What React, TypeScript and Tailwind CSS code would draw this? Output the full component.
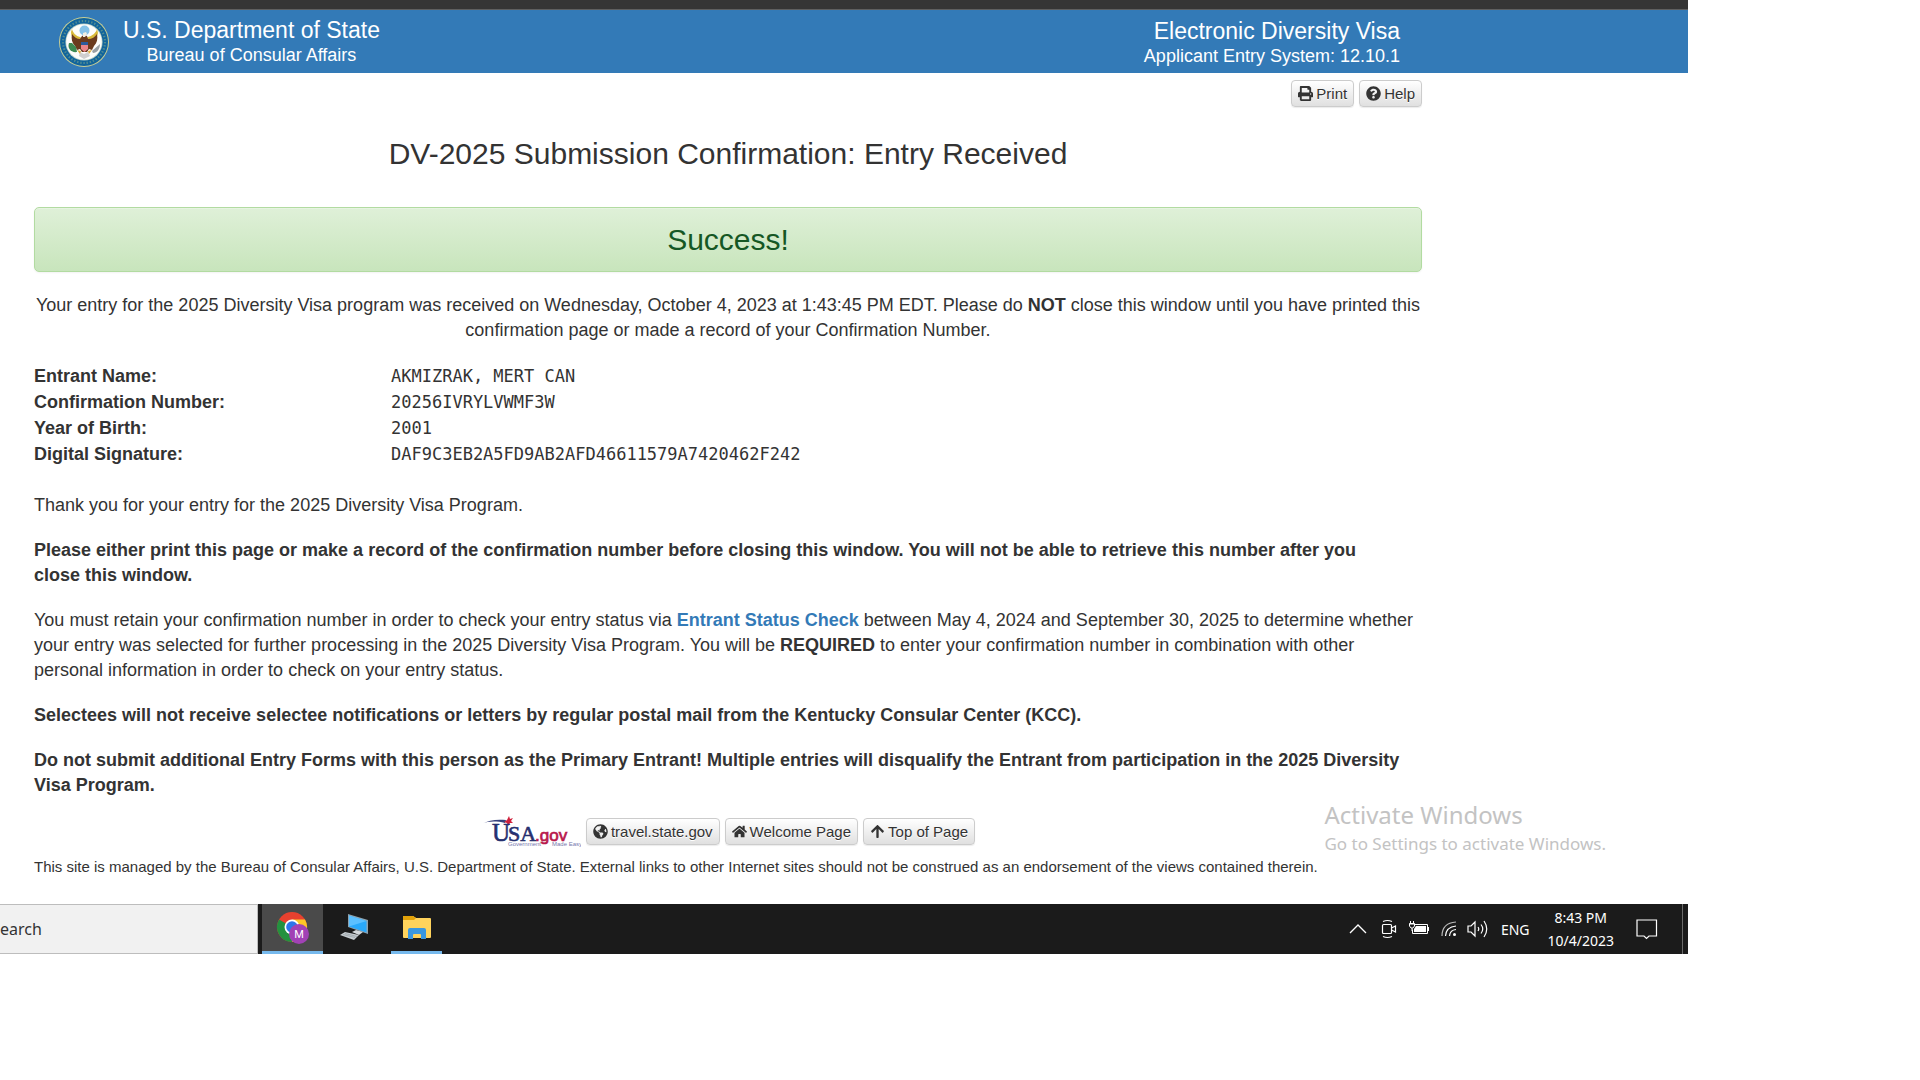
import type { ReactNode } from "react";
import { FaArrowUp, FaGlobeAmericas, FaHome, FaPrint, FaQuestionCircle } from "react-icons/fa";

const entrantDetails = [
  { label: "Entrant Name:", value: "AKMIZRAK, MERT CAN" },
  { label: "Confirmation Number:", value: "20256IVRYLVWMF3W" },
  { label: "Year of Birth:", value: "2001" },
  { label: "Digital Signature:", value: "DAF9C3EB2A5FD9AB2AFD46611579A7420462F242" },
];

const buttonClass =
  "flex h-[27px] cursor-pointer items-center gap-[3px] rounded border border-[#ccc] bg-linear-to-b from-white to-[#e0e0e0] px-1.5 text-[15px] leading-none whitespace-nowrap text-[#333] shadow-[0_1px_1px_rgba(0,0,0,0.08)] [text-shadow:0_1px_0_#fff]";

function SiteButton({ icon, children }: { icon: ReactNode; children: ReactNode }) {
  return (
    <button type="button" className={buttonClass}>
      {icon}
      {children}
    </button>
  );
}

function SiteLink({ icon, children }: { icon: ReactNode; children: ReactNode }) {
  return (
    <a href="#top" className={buttonClass}>
      {icon}
      {children}
    </a>
  );
}

function Seal() {
  return (
    <svg viewBox="0 0 50 50" className="size-[50px] shrink-0" role="img" aria-label="Department of State seal">
      <circle cx="25" cy="25" r="25" fill="#c9cf94" />
      <circle cx="25" cy="25" r="24" fill="#11649c" />
      <circle cx="25" cy="25" r="21" fill="none" stroke="#7fa98c" strokeWidth="2.2" strokeDasharray="1.4 1.8" opacity=".6" />
      <circle cx="25" cy="25" r="18.6" fill="#b9cfc4" />
      <circle cx="25" cy="25" r="17.8" fill="#fdfdfb" />
      <circle cx="25.5" cy="13.500" r="5" fill="#86c3e8" />
      <path d="M13 12c1 4 4 7 8 8l4 3 4-3c4-1 8-4 9-8l1 4c-1 5-4 7-8 9l-6 3-6-3c-4-2-7-5-7-10z" fill="#d9b93a" />
      <path d="M13 17c2 3 5 5 8 5l2-3 2-1 3 1 1 3c4 0 7-2 9-5 1 5 0 9-3 12l-2 4-3-1-2 3h-5l-2-3-3 1-2-4c-3-3-4-7-3-12z" fill="#6b3b1e" />
      <path d="M24 16l3-1 1 2-2 3h-2z" fill="#f3efe2" />
      <path d="M22 25h7v3h-7z" fill="#2c5b9c" />
      <path d="M22 28h7v4l-3.500 3-3.500-3z" fill="#e9848a" />
      <path d="M10 26c-2 5 2 10 8 9l-1-5-4-4z" fill="#3d8a52" />
      <path d="M41 27l-8 7 1 2c4 0 7-4 7-9z" fill="#9aa0a5" />
      <path d="M21 35l4 2 4-2 2 4-6 3-5-3z" fill="#cfcfcf" />
      <path d="M18 33l4 1-1 3zM33 33l-4 1 1 3z" fill="#d9a93a" />
    </svg>
  );
}

function UsaGovLogo() {
  return (
    <svg viewBox="0 0 100 31" className="-my-0.5 h-[31px] w-[100px]" role="img" aria-label="USA.gov, Government Made Easy">
      <path d="M0 8C8 4 16 3 25 4l-1 3C15 5 8 5 0 8z" fill="#35407c" />
      <path d="M28 0l1 3 3-1-2 3 2 2-3 0-2 3-1-3-3-1 3-2z" fill="#d0213c" />
      <text x="11" y="25" fontFamily="Liberation Serif, serif" fontSize="25" fill="#26306f" stroke="#26306f" strokeWidth=".6">U</text>
      <text x="27" y="25" fontFamily="Liberation Serif, serif" fontSize="22" fill="#26306f" stroke="#26306f" strokeWidth=".6">SA</text>
      <text x="54" y="25" fontFamily="Liberation Sans, sans-serif" fontSize="17" fill="#b8174c" stroke="#b8174c" strokeWidth=".7">.gov</text>
      <text x="27" y="30" fontFamily="Liberation Sans, sans-serif" fontSize="6" fill="#7778ad">Government</text>
      <text x="71" y="30" fontFamily="Liberation Sans, sans-serif" fontSize="6" fill="#7778ad">Made Easy</text>
    </svg>
  );
}

function ChromeIcon() {
  return (
    <svg viewBox="0 0 34 34" className="size-[34px]" aria-hidden="true">
      <circle cx="16" cy="16" r="15" fill="#e8412f" />
      <path d="M16 16L3 8.500A15 15 0 0 0 16 31l6.500-11z" fill="#23913f" />
      <path d="M16 8.500h13A15 15 0 0 1 16 31l6.500-11z" fill="#fdc727" />
      <circle cx="16" cy="16" r="7.500" fill="#fff" />
      <circle cx="16" cy="16" r="5.800" fill="#2d75ea" />
      <circle cx="23" cy="23" r="10" fill="#a142b5" />
      <text x="23" y="27" textAnchor="middle" fontFamily="Roboto, sans-serif" fontSize="11" fill="#fff">M</text>
    </svg>
  );
}

function ComputerIcon() {
  return (
    <svg viewBox="0 0 28 27" className="h-[27px] w-7" aria-hidden="true">
      <path d="M8 0l20 6v14L8 13z" fill="#8ea3b0" />
      <path d="M9 1.500l17.500 5.500v11.500L9 12.500z" fill="#29a9fb" />
      <path d="M9 1.500l17.500 5.500L9 12.500z" fill="#5cc0ff" />
      <path d="M12 18l4-2 7 2-4 3z" fill="#d5dadd" />
      <path d="M0 21l5-3 14 3-5 5z" fill="#c7cdd1" />
      <path d="M3 20.500l12 3M5 19.500l12 3" stroke="#8c959b" strokeWidth=".6" />
    </svg>
  );
}

function FolderIcon() {
  return (
    <svg viewBox="0 0 28 24" className="h-6 w-7" aria-hidden="true">
      <path d="M0 1q0-1 1-1h9l3 2h14q1 0 1 1v18q0 1-1 1H1q-1 0-1-1z" fill="#ffd35c" />
      <path d="M0 1q0-1 1-1h9l3 2-2 2H0z" fill="#e3a209" />
      <path d="M5 23V14q0-2 2-2h14q2 0 2 2v9h-5v-4q0-1-1-1h-6q-1 0-1 1v4z" fill="#3a97df" />
    </svg>
  );
}

function TaskButton({ label, active, running, children }: { label: string; active?: boolean; running?: boolean; children: ReactNode }) {
  return (
    <button
      type="button"
      aria-label={label}
      className={
        "flex h-full items-center justify-center border-b-[3px] " +
        (active ? "w-[61px] bg-[#4a4a4a] " : "w-[51px] ") +
        (running ? "border-[#76b9ed]" : "border-transparent")
      }
    >
      {children}
    </button>
  );
}

function TrayIcons() {
  return (
    <div className="flex items-center gap-3 text-white">
      <svg viewBox="0 0 18 20" className="h-5 w-[18px]" fill="none" stroke="currentColor" strokeWidth="1.300" aria-hidden="true">
        <path d="M1 14l8-8 8 8" />
      </svg>
      <svg viewBox="0 0 16 20" className="ml-0.5 h-5 w-4" fill="none" stroke="currentColor" strokeWidth="1.200" aria-hidden="true">
        <rect x="1.500" y="5.500" width="9" height="9" rx="1" />
        <path d="M10.500 9l4-2v6l-4-2M2 2.500q4.500-2 9 0M2 17.500q4.500 2 9 0" />
      </svg>
      <svg viewBox="0 0 20 20" className="h-5 w-5" fill="none" stroke="currentColor" aria-hidden="true">
        <path d="M6 5.500h12.500v9h-15v-4M19.500 8v4M1.500 2v3M4.500 2v3M.5 5h5M3 9v3" />
        <path d="M.5 4.500h5V7L4 9H2L.5 7z" strokeWidth="1" />
        <path d="M7 7h10v6H5v-3z" fill="currentColor" stroke="none" />
      </svg>
      <svg viewBox="0 0 16 20" className="h-5 w-4" fill="none" stroke="currentColor" strokeWidth="1.200" aria-hidden="true">
        <path d="M1 17Q1 4 15 3" opacity=".7" />
        <path d="M4.500 17Q5 8 15 7M8.500 17Q9 11 15 10.500" />
        <circle cx="13.500" cy="15.500" r="1.500" fill="currentColor" stroke="none" />
      </svg>
      <svg viewBox="0 0 22 20" className="-ml-0.5 h-5 w-[22px]" fill="none" stroke="currentColor" strokeWidth="1.200" aria-hidden="true">
        <path d="M1 7h3l4-4v14l-4-4H1z" />
        <path d="M11 8q1.500 2 0 4M14 5.500q3.500 4.500 0 9M17 2q5.500 8 0 16" />
      </svg>
    </div>
  );
}

function Taskbar() {
  return (
    <footer className="flex h-[50px] items-stretch bg-[#1b1b1b] font-['Noto_Sans',sans-serif] text-white">
      <input
        type="text"
        aria-label="Search"
        placeholder="earch"
        className="w-[258px] border border-l-0 border-[#bdbdbd] bg-[#f1f1f1] text-base text-[#333] placeholder:text-[#333] focus:outline-none"
      />
      <nav aria-label="Open applications" className="ml-1 flex">
        <TaskButton label="Google Chrome" active running>
          <ChromeIcon />
        </TaskButton>
        <span className="mr-1.5 flex w-[62px] justify-center">
          <TaskButton label="This PC">
            <ComputerIcon />
          </TaskButton>
        </span>
        <TaskButton label="File Explorer" running>
          <FolderIcon />
        </TaskButton>
      </nav>
      <div className="ml-auto flex items-center">
        <TrayIcons />
        <span className="ml-3 text-[14px]">ENG</span>
        <div className="ml-[18px] text-center text-[14px] leading-[23px]">
          <div>8:43 PM</div>
          <div>10/4/2023</div>
        </div>
        <button type="button" aria-label="Notifications" className="mr-6 ml-[22px]">
          <svg viewBox="0 0 22 22" className="size-[22px]" fill="none" stroke="currentColor" strokeWidth="1.200" aria-hidden="true">
            <path d="M1 2h19.500v16H13l-2.500 2.500L8 18H1z" />
          </svg>
        </button>
        <div className="h-full w-1.5 border-l border-[#6b6b6b]" />
      </div>
    </footer>
  );
}

export default function App() {
  return (
    <div className="min-h-screen bg-white">
      <div id="top" className="relative mr-[232px] font-['Liberation_Sans',Arial,sans-serif] text-[#333]">
        <div className="h-2.5 border-b border-[#5f5f5f] bg-[#353535]" />
        <header className="flex h-[63px] items-center justify-between bg-[#337ab7] pr-[288px] pl-[59px] text-white">
          <div className="flex items-center gap-3.5">
            <Seal />
            <div className="text-center">
              <div className="text-[23px] leading-[26px]">U.S. Department of State</div>
              <div className="text-lg leading-6">Bureau of Consular Affairs</div>
            </div>
          </div>
          <div className="pt-0.5 text-right">
            <div className="text-[23px] leading-[26px]">Electronic Diversity Visa</div>
            <div className="text-lg leading-6">Applicant Entry System: 12.10.1</div>
          </div>
        </header>

        <main className="mr-[266px] ml-[34px] pt-[7px] text-lg leading-[25px]">
          <div className="flex justify-end gap-[5px]">
            <SiteButton icon={<FaPrint />}>Print</SiteButton>
            <SiteButton icon={<FaQuestionCircle />}>Help</SiteButton>
          </div>

          <h1 className="mt-[29px] text-center text-[30px] leading-9">DV-2025 Submission Confirmation: Entry Received</h1>

          <div
            role="status"
            className="mt-[35px] flex h-[65px] items-center justify-center rounded-[5px] border border-[#b2dba1] bg-linear-to-b from-[#dff0d8] to-[#c8e5bc] text-[30px] text-[#155724] shadow-[inset_0_1px_0_rgba(255,255,255,0.25),0_1px_2px_rgba(0,0,0,0.05)]"
          >
            Success!
          </div>

          <p className="mt-[21px] text-center">
            Your entry for the 2025 Diversity Visa program was received on Wednesday, October 4, 2023 at 1:43:45 PM EDT.
            Please do <strong>NOT</strong> close this window until you have printed this confirmation page or made a
            record of your Confirmation Number.
          </p>

          <dl className="mt-5 grid grid-cols-[357px_1fr]">
            {entrantDetails.map((item) => (
              <div key={item.label} className="contents">
                <dt className="leading-[26px] font-bold">{item.label}</dt>
                <dd className="font-['DejaVu_Sans_Mono',monospace] text-[17px] leading-[26px]">{item.value}</dd>
              </div>
            ))}
          </dl>

          <div className="mt-[26px] flex flex-col gap-5">
            <p>Thank you for your entry for the 2025 Diversity Visa Program.</p>
            <p className="font-bold">
              Please either print this page or make a record of the confirmation number before closing this window. You
              will not be able to retrieve this number after you <br />
              close this window.
            </p>
            <p>
              You must retain your confirmation number in order to check your entry status via{" "}
              <a href="#status" className="font-bold text-[#337ab7]">
                Entrant Status Check
              </a>{" "}
              between May 4, 2024 and September 30, 2025 to determine whether <br />
              your entry was selected for further processing in the 2025 Diversity Visa Program. You will be{" "}
              <strong>REQUIRED</strong> to enter your confirmation number in combination with other <br />
              personal information in order to check on your entry status.
            </p>
            <p className="font-bold">
              Selectees will not receive selectee notifications or letters by regular postal mail from the Kentucky
              Consular Center (KCC).
            </p>
            <p className="font-bold">
              Do not submit additional Entry Forms with this person as the Primary Entrant! Multiple entries will
              disqualify the Entrant from participation in the 2025 Diversity <br />
              Visa Program.
            </p>
          </div>

          <div className="mt-5 flex items-center justify-center gap-[5px]">
            <a href="#usa">
              <UsaGovLogo />
            </a>
            <SiteLink icon={<FaGlobeAmericas />}>travel.state.gov</SiteLink>
            <SiteLink icon={<FaHome />}>Welcome Page</SiteLink>
            <SiteLink icon={<FaArrowUp />}>Top of Page</SiteLink>
          </div>

          <p className="mt-[9px] pb-[25px] text-[15px]">
            This site is managed by the Bureau of Consular Affairs, U.S. Department of State. External links to other
            Internet sites should not be construed as an endorsement of the views contained therein.
          </p>
        </main>

        <Taskbar />

        <div className="absolute right-[82px] bottom-[97px] font-['Noto_Sans',sans-serif] text-[#c3c3c3]">
          <div className="text-[24px] leading-8">Activate Windows</div>
          <div className="text-[17px] leading-[26px]">Go to Settings to activate Windows.</div>
        </div>
      </div>
    </div>
  );
}
